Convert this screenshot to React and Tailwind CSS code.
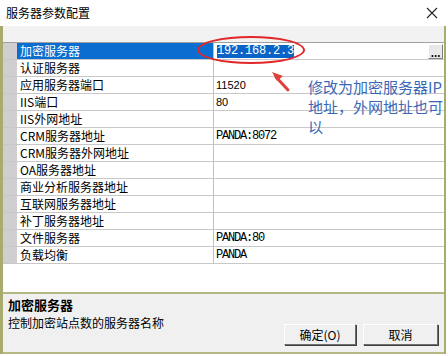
const rows = [
  { name: "加密服务器", value: "192.168.2.3", selected: true },
  { name: "认证服务器", value: "" },
  { name: "应用服务器端口", value: "11520", kind: "sans" },
  { name: "IIS端口", value: "80", kind: "sans" },
  { name: "IIS外网地址", value: "" },
  { name: "CRM服务器地址", value: "PANDA:8072", kind: "mono" },
  { name: "CRM服务器外网地址", value: "" },
  { name: "OA服务器地址", value: "" },
  { name: "商业分析服务器地址", value: "" },
  { name: "互联网服务器地址", value: "" },
  { name: "补丁服务器地址", value: "" },
  { name: "文件服务器", value: "PANDA:80", kind: "mono" },
  { name: "负载均衡", value: "PANDA", kind: "mono" },
];

function ValueCell({ row }) {
  if (row.selected) {
    return (
      <div className="flex flex-1 items-center justify-between bg-white pl-[3px] pr-[1px]">
        <span className="bg-[#0a64c8] font-['Liberation_Mono'] text-[12px] leading-[13px] tracking-[-0.2px] text-white">
          {row.value}
        </span>
        <span className="flex h-[15px] w-[15px] items-end justify-center border border-t-white border-l-white border-b-[#808080] border-r-[#808080] bg-[#e8e8e8] text-[10px] leading-[10px] font-bold text-black">
          ...
        </span>
      </div>
    );
  }
  const font =
    row.kind === "mono"
      ? "font-['Liberation_Mono'] text-[12px] tracking-[-1.2px]"
      : "font-['Liberation_Sans'] text-[11px]";
  return (
    <div className={`flex flex-1 items-center pl-[2px] text-black ${font}`}>
      {row.value}
    </div>
  );
}

function Button({ children, className }) {
  return (
    <div
      className={`flex h-[21px] items-center justify-center border border-t-white border-l-white border-b-[#6e6e6e] border-r-[#6e6e6e] bg-[#f0f0f0] text-[12px] text-black shadow-[1px_1px_0_#404040] ${className}`}
    >
      {children}
    </div>
  );
}

export default function App() {
  return (
    <div className="relative flex h-[356px] w-[448px] flex-col overflow-hidden bg-white font-['Noto_Sans_CJK_SC',sans-serif] text-black">
      {/* title bar */}
      <div className="flex h-[26px] items-center justify-between bg-white pl-[6px] pr-[10px]">
        <span className="text-[12px] leading-none">服务器参数配置</span>
        <svg width="12" height="12" viewBox="0 0 12 12" className="text-[#222]">
          <path d="M1 1L11 11M11 1L1 11" stroke="currentColor" strokeWidth="1.1" />
        </svg>
      </div>

      <div className="mr-[2px] flex flex-1 flex-col border-l-[3px] border-r-[2px] border-[#a9ab6e]">
        <div className="h-[16px] bg-[#f2f2f2]" />

        {/* property grid */}
        <div className="flex flex-col border-t border-[#a0a0a0]">
          {rows.map((row) => (
            <div key={row.name} className="flex h-[17px] border-b border-[#c8c8c8]">
              <div className="w-[14px] bg-[#cfcfcf]" />
              <div
                className={`flex w-[197px] items-center border-r border-[#c0c0c0] pl-[3px] text-[12px] leading-none ${
                  row.selected ? "bg-[#0a6ed1] text-white" : "bg-white"
                }`}
              >
                {row.name}
              </div>
              <ValueCell row={row} />
            </div>
          ))}
        </div>

        <div className="flex-1 bg-white" />

        {/* description panel */}
        <div className="flex h-[62px] border-t-[2px] border-b-[2px] border-[#b5b784] bg-[#f0f0f0]">
          <div className="flex flex-1 flex-col gap-[2px] pl-[5px] pt-[3px]">
            <span className="text-[13px] font-bold leading-[16px]">加密服务器</span>
            <span className="text-[12px] leading-[15px]">控制加密站点数的服务器名称</span>
          </div>
          <div className="flex items-end gap-[7px] pb-[7px] pr-[6px]">
            <Button className="w-[72px]">确定(O)</Button>
            <Button className="w-[75px]">取消</Button>
          </div>
        </div>
      </div>
      <div className="h-[2px] bg-white" />

      {/* annotations */}
      <div className="pointer-events-none absolute left-[197px] top-[36px] h-[28px] w-[108px] rounded-[50%] border-[2.5px] border-[#e0282a]" />
      <svg className="pointer-events-none absolute left-[266px] top-[66px]" width="30" height="30" viewBox="0 0 30 30">
        <path d="M22 24L10 11" stroke="#e0403a" strokeWidth="3" strokeLinecap="round" />
        <path d="M6 6L17 10L11 15Z" fill="#e0403a" />
      </svg>
      <div className="pointer-events-none absolute left-[308px] top-[77px] w-[138px] text-[15px] leading-[20px] text-[#3b68b4]">
        修改为加密服务器IP地址，外网地址也可以
      </div>
    </div>
  );
}
